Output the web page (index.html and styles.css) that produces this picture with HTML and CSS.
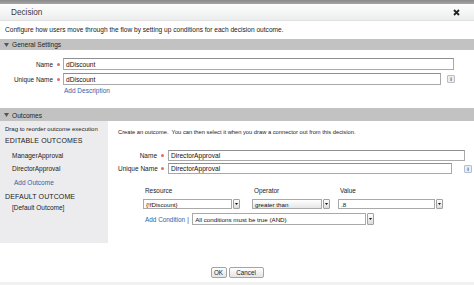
FILE: index.html
```html
<!DOCTYPE html>
<html>
<head>
<meta charset="utf-8">
<link rel="stylesheet" href="styles.css">
</head>
<body>
<div class="topstrip"></div>
<div class="header">
  <span class="title">Decision</span>
  <svg class="close" width="7" height="7" viewBox="0 0 7 7"><path d="M1 1L6 6M6 1L1 6" stroke="#222" stroke-width="1.8"/></svg>
</div>
<div class="intro">Configure how users move through the flow by setting up conditions for each decision outcome.</div>
<div class="bar"><svg class="tri" width="5" height="4" viewBox="0 0 5 4"><path d="M0 0H5L2.5 4Z" fill="#555"/></svg><span>General Settings</span></div>
<div class="general">
  <div class="frow">
    <span class="lbl">Name</span><span class="req"><i class="dot"></i></span>
    <span class="input w-name">dDiscount</span>
  </div>
  <div class="frow">
    <span class="lbl">Unique Name</span><span class="req"><i class="dot"></i></span>
    <span class="input w-uname">dDiscount</span>
    <span class="info">i</span>
  </div>
  <div class="link adddesc">Add Description</div>
</div>
<div class="bar tall"><svg class="tri" width="5" height="4" viewBox="0 0 5 4"><path d="M0 0H5L2.5 4Z" fill="#555"/></svg><span>Outcomes</span></div>
<div class="outcomes">
  <div class="left">
    <div class="drag">Drag to reorder outcome execution</div>
    <div class="head h1">EDITABLE OUTCOMES</div>
    <div class="item i1">ManagerApproval</div>
    <div class="item i2">DirectorApproval</div>
    <div class="link addout">Add Outcome</div>
    <div class="head h2">DEFAULT OUTCOME</div>
    <div class="item i3">[Default Outcome]</div>
  </div>
  <div class="right">
    <div class="create">Create an outcome.&nbsp; You can then select it when you draw a connector out from this decision.</div>
    <div class="orow first">
      <span class="olbl">Name</span><span class="oreq"><i class="dot"></i></span>
      <span class="input o-name">DirectorApproval</span>
    </div>
    <div class="orow">
      <span class="olbl">Unique Name</span><span class="oreq"><i class="dot"></i></span>
      <span class="input o-uname">DirectorApproval</span>
      <span class="info oinfo">i</span>
    </div>
    <div class="cond">
      <div class="chead">
        <span class="c-res">Resource</span>
        <span class="c-op">Operator</span>
        <span class="c-val">Value</span>
      </div>
      <div class="csel">
        <span class="sel c-res"><span class="field">{!fDiscount}</span><span class="btn"><svg width="3" height="2" viewBox="0 0 3 2"><path d="M0 0H3L1.5 2Z" fill="#111"/></svg></span></span>
        <span class="sel c-op"><span class="field grad">greater than</span><span class="btn"><svg width="3" height="2" viewBox="0 0 3 2"><path d="M0 0H3L1.5 2Z" fill="#111"/></svg></span></span>
        <span class="sel c-val"><span class="field">.8</span><span class="btn"><svg width="3" height="2" viewBox="0 0 3 2"><path d="M0 0H3L1.5 2Z" fill="#111"/></svg></span></span>
      </div>
      <div class="androw">
        <span class="link addcond">Add Condition</span><span class="pipe">|</span>
        <span class="sel andsel"><span class="field">All conditions must be true (AND)</span><span class="btn"><svg width="3" height="2" viewBox="0 0 3 2"><path d="M0 0H3L1.5 2Z" fill="#111"/></svg></span></span>
      </div>
    </div>
  </div>
</div>
<div class="footer">
  <span class="button ok">OK</span>
  <span class="button cancel">Cancel</span>
</div>
<div class="band"></div>
</body>
</html>
```
FILE: styles.css
```css
* { box-sizing: border-box; }
html, body { margin: 0; padding: 0; }
body {
  width: 474px;
  height: 285px;
  overflow: hidden;
  background: #fff;
  font-family: "Liberation Sans", Arial, sans-serif;
  color: #222;
}
.topstrip { height: 4px; background: linear-gradient(#8a8a8a, #a5a5a5); }
.header {
  height: 17px;
  display: flex;
  align-items: center;
  justify-content: space-between;
  padding: 0 14px 0 11px;
  background: linear-gradient(#fdfdfd, #eceeee);
  border-bottom: 1px solid #e0e0e0;
}
.title { font-size: 8.2px; color: #3a3a3a; }
.close { display: block; }
.intro {
  height: 18px;
  padding: 4px 5px 0;
  font-size: 6.6px;
  line-height: 9px;
  color: #222;
  white-space: nowrap;
}
.bar {
  height: 11px;
  background: #c2c2c2;
  display: flex;
  align-items: center;
  gap: 3px;
  padding-left: 4px;
  font-size: 6.6px;
  color: #222;
}
.bar.tall {
  height: 13px;
  margin-top: 12px;
  padding-top: 1px;
}
.tri { display: block; }
.general { padding-top: 8px; }
.frow { display: flex; align-items: center; height: 12px; }
.frow + .frow { margin-top: 3px; }
.lbl { width: 53px; text-align: right; font-size: 6.4px; white-space: nowrap; }
.req, .oreq { display: flex; justify-content: center; align-items: center; }
.req { width: 10px; }
.dot { display: block; width: 3px; height: 3px; border-radius: 50%; background: #e06a6a; }
.input {
  display: flex;
  align-items: center;
  height: 12px;
  border: 1px solid #a9a9a9;
  border-top-color: #8f8f8f;
  background: #fff;
  font-size: 6.6px;
  padding-left: 2px;
  color: #111;
  white-space: nowrap;
}
.w-name { width: 391px; }
.w-uname { width: 378px; }
.info {
  display: flex;
  align-items: center;
  justify-content: center;
  width: 8px;
  height: 8px;
  margin-left: 6px;
  border: 1px solid #b7bfcc;
  border-radius: 1px;
  background: #e9eef5;
  font-size: 5.5px;
  font-weight: bold;
  color: #445;
}
.link { color: #2f5fa8; }
.adddesc { padding-left: 64px; margin-top: 1px; line-height: 10px; font-size: 6.5px; }

.outcomes { display: flex; height: 122px; }
.left { width: 108px; background: #ececee; padding-top: 3px; }
.left > div { white-space: nowrap; line-height: 10px; }
.drag { padding-left: 5px; font-size: 6px; }
.head { padding-left: 5px; font-size: 7px; letter-spacing: 0.1px; color: #222; }
.h1 { margin-top: 2px; }
.item { padding-left: 12px; font-size: 6.5px; }
.i1 { margin-top: 5px; }
.i2 { margin-top: 3px; }
.addout { padding-left: 14px; margin-top: 4px; font-size: 6.5px; }
.h2 { margin-top: 4px; }
.i3 { margin-top: 1px; }

.right { flex: 1; padding-left: 10px; }
.create { margin-top: 6px; line-height: 10px; font-size: 5.75px; white-space: nowrap; }
.orow { display: flex; align-items: center; height: 11px; }
.orow.first { margin-top: 13px; }
.orow + .orow { margin-top: 2px; }
.olbl { width: 39px; text-align: right; font-size: 6.5px; white-space: nowrap; }
.oreq { width: 11px; }
.orow .input { height: 11px; }
.o-name { width: 297px; }
.o-uname { width: 284px; }
.oinfo { margin-left: 12px; }

.cond { padding-left: 25px; }
.chead, .csel { display: flex; }
.chead { margin-top: 12px; line-height: 10px; font-size: 6.4px; }
.chead span { padding-left: 2px; }
.c-res { width: 97px; }
.c-op { width: 78px; margin-left: 12px; }
.c-val { width: 105px; margin-left: 8px; }
.csel { margin-top: 3px; }
.sel { display: flex; height: 10px; gap: 1px; }
.field {
  flex: 1;
  display: flex;
  align-items: center;
  border: 1px solid #a9a9a9;
  background: #fff;
  font-size: 6.2px;
  padding-left: 2px;
  white-space: nowrap;
  color: #111;
}
.field.grad { background: linear-gradient(#fff, #e6e6e6); }
.btn {
  width: 7px;
  display: flex;
  align-items: center;
  justify-content: center;
  border: 1px solid #a0a0a0;
  border-radius: 1px;
  background: linear-gradient(#fdfdfd, #dcdcdc);
}
.btn svg { display: block; }
.androw { display: flex; align-items: center; margin-top: 4px; height: 12px; }
.addcond { padding-left: 2px; font-size: 6.4px; }
.pipe { font-size: 6.4px; color: #444; margin-left: 2px; width: 5px; }
.andsel { width: 182px; height: 12px; }

.footer { display: flex; justify-content: center; gap: 2px; margin-top: 24px; }
.button {
  display: flex;
  align-items: center;
  justify-content: center;
  height: 11px;
  border: 1px solid #a4a4a4;
  border-radius: 2px;
  background: linear-gradient(#ffffff, #e4e4e4);
  font-size: 6.3px;
  color: #222;
}
.ok { width: 16px; }
.cancel { width: 35px; }
.band { margin-top: 4px; height: 10px; background: #f1f1f1; }
```
